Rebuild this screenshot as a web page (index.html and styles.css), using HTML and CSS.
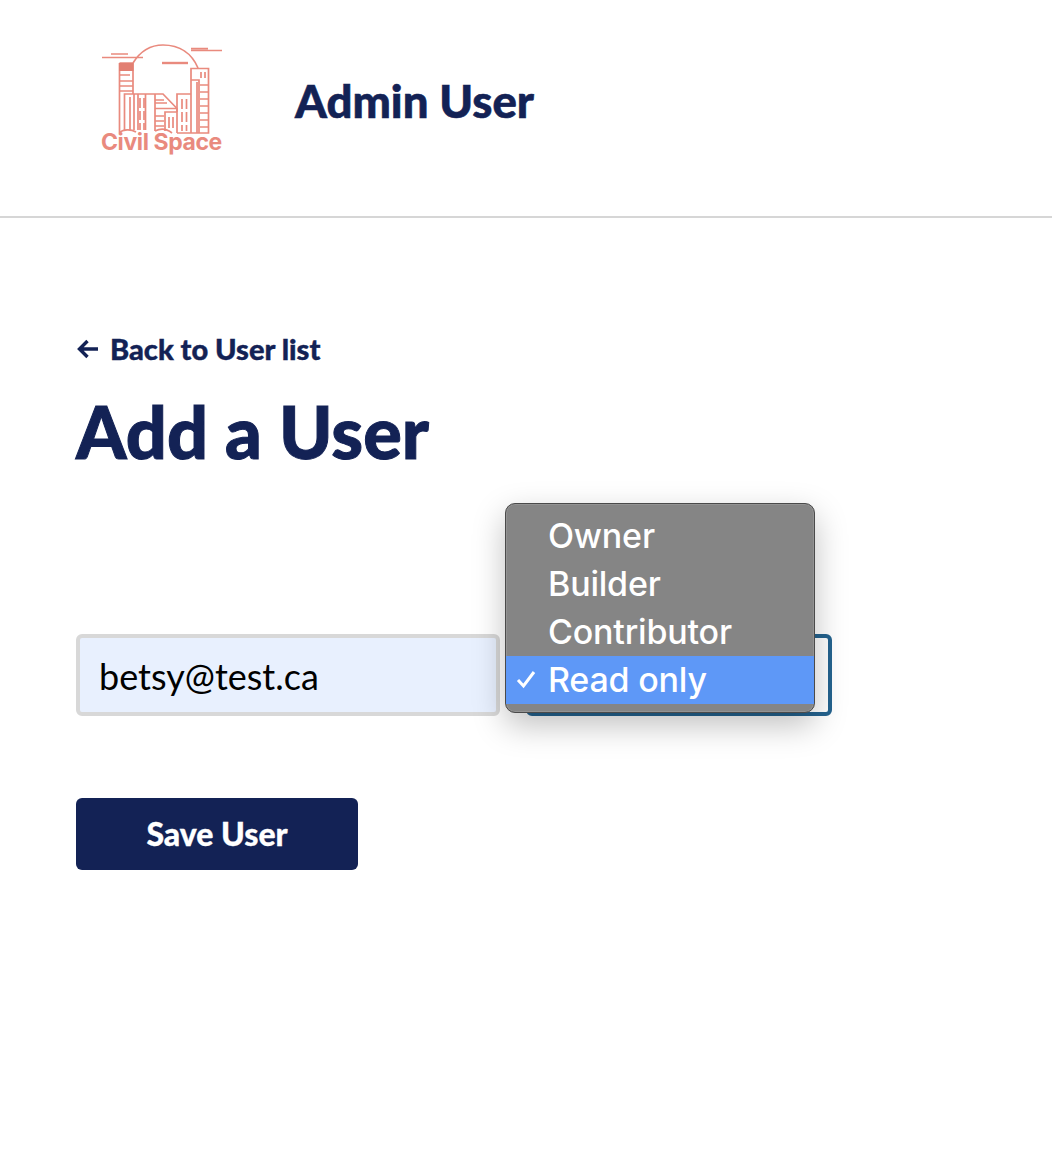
FILE: index.html
```html
<!DOCTYPE html>
<html lang="en">
<head>
  <meta charset="UTF-8">
  <meta name="viewport" content="width=device-width, initial-scale=1.0">
  <title>Admin User</title>
  <link rel="stylesheet" href="styles.css">
</head>
<body>

  <!-- Header -->
  <header class="site-header">
    <svg class="logo" viewBox="80 30 170 140" width="170" height="140" aria-label="Civil Space">
      <g fill="none" stroke="#e98a7e" stroke-width="1.7">
        <!-- dome -->
        <path d="M133 63 C141 50 151 45 163 45 C180 45 192 54 198 68" />
        <path d="M162 63 H188" stroke-width="2.4" />
        <!-- clouds -->
        <path d="M102 57.5 H143 M111 54 H128" />
        <path d="M191 48.7 H208 M191 50.5 H222" />
        <!-- left tower -->
        <path d="M119.5 63 H133 V94 M119.5 63 V132" />
        <path d="M120 75 H130 M120 81 H133 M120 86 H133 M120 91 H133" />
        <!-- first block -->
        <path d="M124.5 130 V94 H163 L177 108.5 V112" />
        <path d="M130 97 V130 M134 94 V130 M138 94 V130" />
        <path d="M140 98 V108 M144 98 V108 M140 111 V120 M144 111 V120 M140 123 V130 M144 123 V130" />
        <!-- sloped block -->
        <path d="M145.5 94 V130 M155 94 V131" />
        <path d="M155 100 H164 M155 103 H167 M155 108.5 H177" />
        <path d="M155 116 H164 M155 121 H164 M155 126 H164" />
        <path d="M165 131 V112 H177 M169 117 V128 M173 117 V128" />
        <!-- right blocks -->
        <path d="M177 133 V94 H191" />
        <path d="M182 99 V109 M186.500 99 V109 M182 112 V122 M186.500 112 V122 M182 125 V131 M186.500 125 V131" />
        <path d="M191 133 V68.500 H208.500 V133 H177" />
        <path d="M191 80 H199 V133 M197 82 V133" />
        <path d="M201 72 V78 M205 72 V78" />
        <path d="M200 85 H208 M200 92 H208 M200 99 H208 M200 106 H208 M200 113 H208 M200 120 H208 M200 127 H208" />
        <!-- ground -->
        <path d="M119 133 C123 129 131 129 136 132 M155 131 C161 128 167 129 172 133" />
      </g>
      <rect x="119" y="63" width="14.500" height="8" fill="#e27f72" />
      <text class="logo-text" x="101" y="150">Civil Space</text>
    </svg>
    <h2 class="site-title">Admin User</h2>
  </header>

  <main class="content">
    <a class="back-link" href="#">
      <svg class="back-arrow" viewBox="0 0 24 24" width="24" height="24">
        <path d="M22 12 H4 M11.500 4 L3.500 12 L11.500 20" fill="none" stroke="#132255" stroke-width="3.400" />
      </svg>
      Back to User list
    </a>
    <h1 class="page-title">Add a User</h1>

    <form class="user-form">
      <div class="form-row">
        <div class="field-email">betsy@test.ca</div>
        <div class="field-role">
          <!-- Open native select popup -->
          <ul class="role-menu">
            <li>Owner</li>
            <li>Builder</li>
            <li>Contributor</li>
            <li class="selected">
              <svg class="check" viewBox="0 0 20 20" width="20" height="20">
                <path d="M2 11 L7.500 17 L18 3" fill="none" stroke="#ffffff" stroke-width="3" />
              </svg>
              Read only
            </li>
          </ul>
        </div>
      </div>
      <button class="save-btn" type="button">Save User</button>
    </form>
  </main>

</body>
</html>
```

FILE: styles.css
```css
/* General Styles */
body {
  font-family: Lato, sans-serif;
  background: #ffffff;
  color: #132255;
  margin: 0;
}

/* Header */
.site-header {
  display: flex;
  align-items: center;
  height: 216px;
  padding-left: 80px;
  border-bottom: 2px solid #d6d6d6;
}

.logo {
  flex: none;
  margin-bottom: 16px;
}

.logo-text {
  font-family: Inter, sans-serif;
  font-size: 23px;
  font-weight: 700;
  letter-spacing: -0.4px;
  fill: #e98a7e;
}

.site-title {
  margin: 0 0 14px 45px;
  font-size: 45.500px;
  font-weight: 900;
  line-height: 1;
  -webkit-text-stroke: 0.6px #132255;
}

/* Content */
.content {
  padding: 113px 76px 0;
}

.back-link {
  display: flex;
  align-items: center;
  gap: 10px;
  color: #132255;
  font-size: 29px;
  font-weight: 900;
  line-height: 36px;
  text-decoration: none;
  -webkit-text-stroke: 0.4px #132255;
}

.page-title {
  margin: 21px 0 0;
  font-size: 72px;
  font-weight: 900;
  line-height: 86px;
  -webkit-text-stroke: 1px #132255;
}

/* Form */
.user-form {
  margin-top: 160px;
}

.form-row {
  display: flex;
  gap: 26px;
}

.field-email {
  box-sizing: border-box;
  width: 424px;
  height: 82px;
  padding: 0 19px;
  background: #e8f0fe;
  border: 4px solid #d8d8d8;
  border-radius: 6px;
  color: #000000;
  font-size: 36px;
  line-height: 76px;
}

.field-role {
  box-sizing: border-box;
  position: relative;
  width: 306px;
  height: 82px;
  border: 4px solid #24638f;
  border-radius: 6px;
}

/* Select popup */
.role-menu {
  position: absolute;
  top: -135px;
  left: -25px;
  box-sizing: border-box;
  width: 310px;
  height: 210px;
  margin: 0;
  padding: 8px 0;
  list-style: none;
  background: #858585;
  border: 1px solid #4a4a4a;
  border-radius: 10px;
  box-shadow: 0 12px 32px rgba(0, 0, 0, 0.25), inset 0 0 0 1px rgba(255, 255, 255, 0.12);
  color: #ffffff;
  font-family: Inter, sans-serif;
  font-size: 34px;
  font-weight: 500;
  letter-spacing: -0.2px;
  line-height: 47px;
}

.role-menu li {
  position: relative;
  height: 48px;
  padding-left: 42px;
}

.role-menu .selected {
  background: #5e98f7;
}

.check {
  position: absolute;
  left: 10px;
  top: 13px;
}

.save-btn {
  display: block;
  width: 282px;
  height: 72px;
  margin-top: 82px;
  padding: 0 0 2px;
  background: #132255;
  border: none;
  border-radius: 6px;
  color: #ffffff;
  font-family: Lato, sans-serif;
  font-size: 32px;
  font-weight: 900;
  -webkit-text-stroke: 0.3px #ffffff;
}
```
